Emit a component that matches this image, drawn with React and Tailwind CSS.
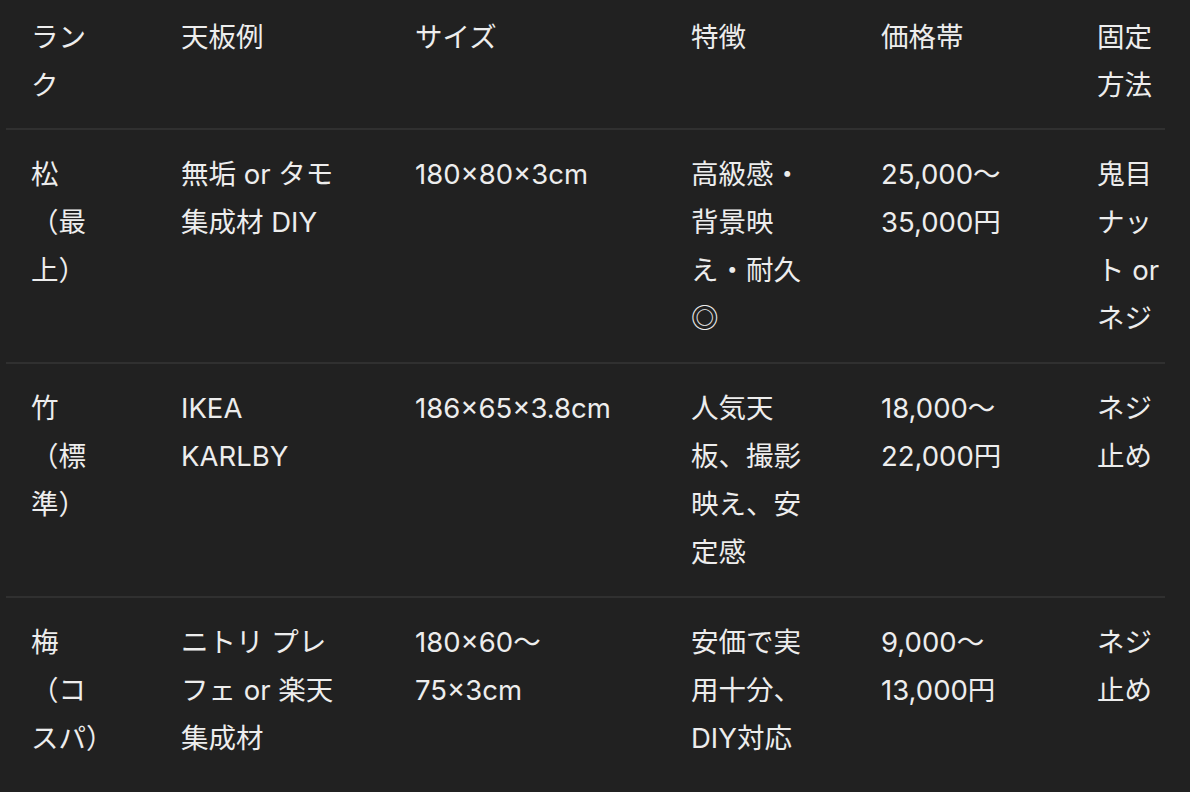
const header = [['ラン', 'ク'], ['天板例'], ['サイズ'], ['特徴'], ['価格帯'], ['固定', '方法']];

const rows = [
  [
    ['松', '（最', '上）'],
    ['無垢 or タモ', '集成材 DIY'],
    ['180×80×3cm'],
    ['高級感・', '背景映', 'え・耐久', '◎'],
    ['25,000〜', '35,000円'],
    ['鬼目', 'ナッ', 'ト or', 'ネジ'],
  ],
  [
    ['竹', '（標', '準）'],
    ['IKEA', 'KARLBY'],
    ['186×65×3.8cm'],
    ['人気天', '板、撮影', '映え、安', '定感'],
    ['18,000〜', '22,000円'],
    ['ネジ', '止め'],
  ],
  [
    ['梅', '（コ', 'スパ）'],
    ['ニトリ プレ', 'フェ or 楽天', '集成材'],
    ['180×60〜', '75×3cm'],
    ['安価で実', '用十分、', 'DIY対応'],
    ['9,000〜', '13,000円'],
    ['ネジ', '止め'],
  ],
];

function Row({ cells, className }) {
  return (
    <div className={`grid grid-cols-[150px_234px_276px_190px_216px_93px] ${className}`}>
      {cells.map((lines, i) => (
        <div key={i} className="pl-[25px]">
          {lines.map((l, j) => (
            <div key={j} className="whitespace-nowrap leading-[48px]">{l}</div>
          ))}
        </div>
      ))}
    </div>
  );
}

export default function App() {
  return (
    <div
      className="w-[1190px] h-[792px] overflow-hidden bg-[#212121] text-[#ededed] text-[27.5px]"
      style={{ fontFamily: '"Inter", "Noto Sans CJK JP", sans-serif' }}
    >
      <div className="ml-[6px] w-[1159px]">
        <Row cells={header} className="pt-[13px] pb-[19px] border-b-2 border-[#303030]" />
        {rows.map((r, i) => (
          <Row
            key={i}
            cells={r}
            className={`py-[20px] ${i < rows.length - 1 ? 'border-b-2 border-[#303030]' : ''}`}
          />
        ))}
      </div>
    </div>
  );
}
